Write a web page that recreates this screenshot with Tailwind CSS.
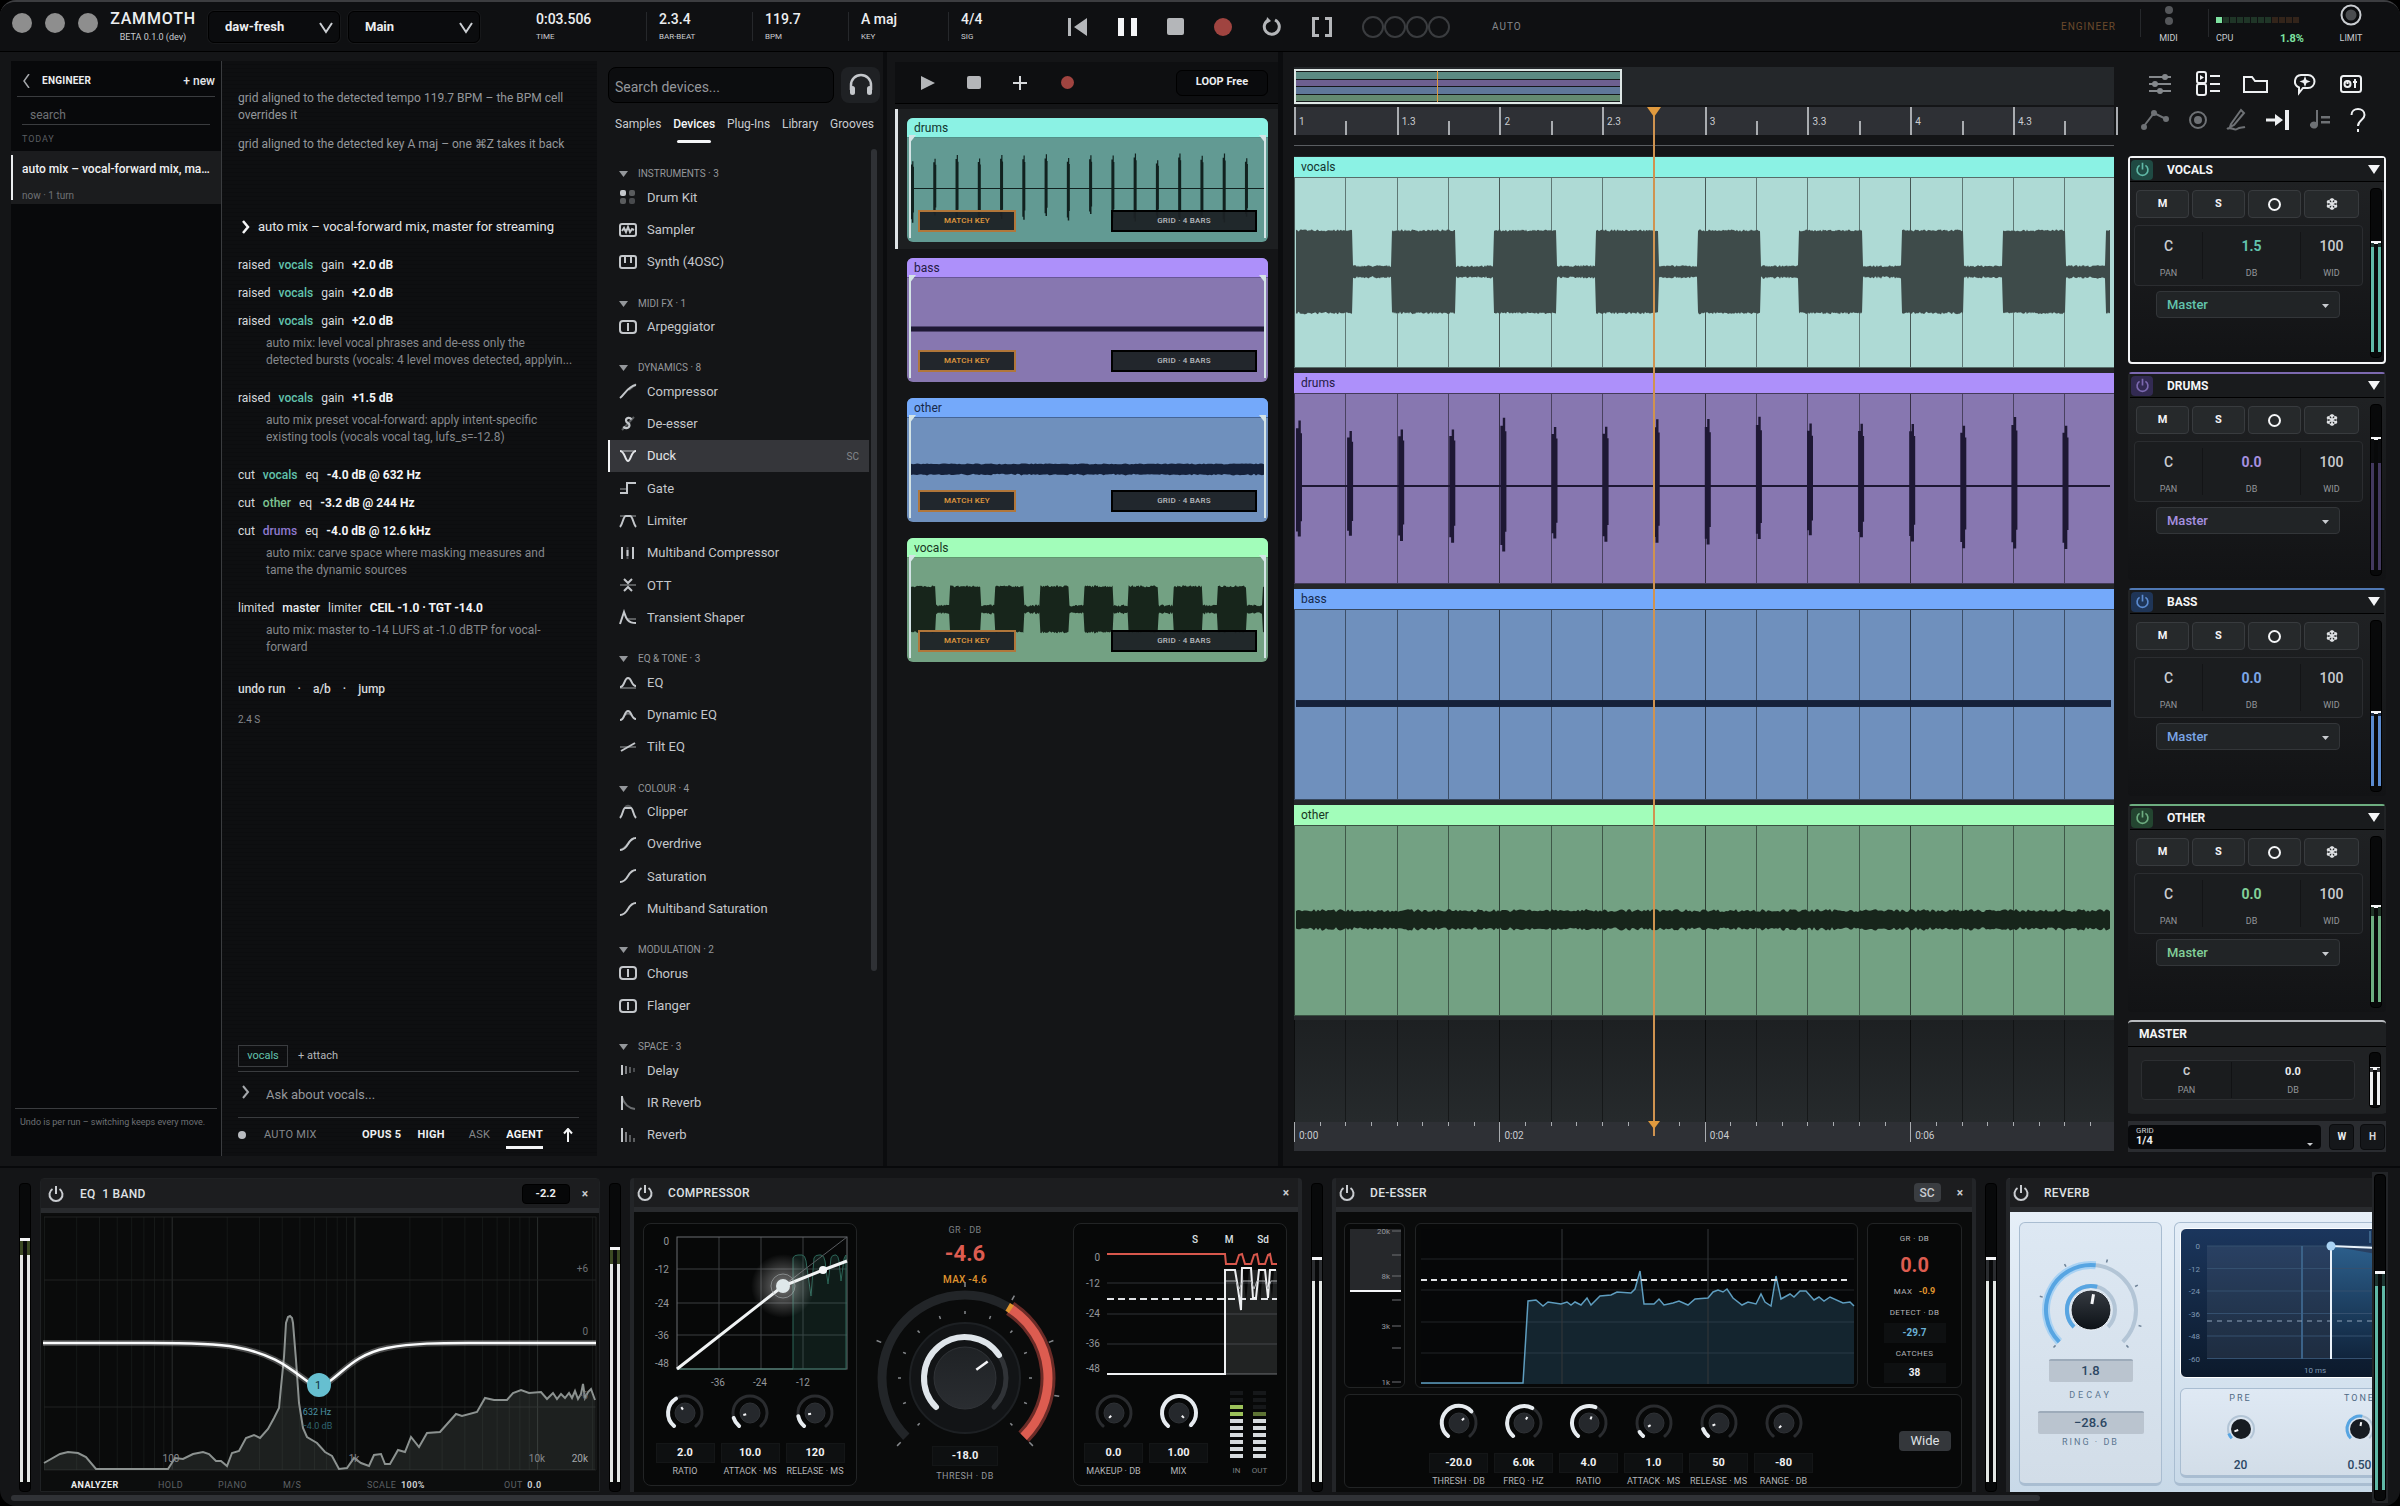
<!DOCTYPE html>
<html lang="en">
<head>
<meta charset="UTF-8">
<meta name="viewport" content="width=device-width, initial-scale=1.0">
<title>Zammoth</title>
<script src="https://cdn.jsdelivr.net/npm/@tailwindcss/browser@4"></script>
</head>
<body class="bg-black font-[Roboto,sans-serif] text-[#c9ccd0] text-[13px]">
<div class="h-screen flex flex-col bg-[#141517] rounded-2xl overflow-hidden border-t-2 border-[#3c3d40]">

<!-- Transport bar -->
<header class="h-[50px] shrink-0 flex items-center bg-[#0f1012] border-b border-black relative">
    <div class="flex gap-[13px] ml-3 -mt-2">
        <i class="size-5 rounded-full bg-[#8e8e8e]"></i>
        <i class="size-5 rounded-full bg-[#8e8e8e]"></i>
        <i class="size-5 rounded-full bg-[#8e8e8e]"></i>
    </div>
    <div class="ml-[10px] w-[90px] text-center leading-none">
        <div class="text-[16px] font-medium tracking-wider text-[#eceef0]">ZAMMOTH</div>
        <div class="text-[9px] mt-1.5 text-[#c9ccd0]">BETA 0.1.0 (dev)</div>
    </div>
    <div class="flex gap-2 ml-[10px]">
        <label class="relative w-[132px] h-8 rounded-md bg-[#0b0c0e] border border-black shadow-[0_0_0_1px_#17181a]">
            <select aria-label="Project" class="appearance-none w-full h-full pl-4 text-[13px] font-bold text-[#eceef0]"><option>daw-fresh</option></select>
            <svg class="absolute right-1.5 top-2.5 pointer-events-none" width="14" height="12" fill="none" stroke="#c9ccd0" stroke-width="2"><path d="M1 1l6 9 6-9"/></svg>
        </label>
        <label class="relative w-[132px] h-8 rounded-md bg-[#0b0c0e] border border-black shadow-[0_0_0_1px_#17181a]">
            <select aria-label="Branch" class="appearance-none w-full h-full pl-4 text-[13px] font-bold text-[#eceef0]"><option>Main</option></select>
            <svg class="absolute right-1.5 top-2.5 pointer-events-none" width="14" height="12" fill="none" stroke="#c9ccd0" stroke-width="2"><path d="M1 1l6 9 6-9"/></svg>
        </label>
    </div>
    <dl id="readouts" class="flex ml-[56px] leading-none"></dl>
    <div class="flex items-center gap-[30px] ml-2">
        <button aria-label="Rewind"><svg width="20" height="18" fill="#b4b6b9"><path d="M0 0h3v18H0zM19 0v18L6 9z"/></svg></button>
        <button aria-label="Pause"><svg width="19" height="18" fill="#f4f5f7"><path d="M0 0h6v18H0zM13 0h6v18h-6z"/></svg></button>
        <button aria-label="Stop"><svg width="17" height="18" fill="#b4b6b9"><rect width="17" height="17" rx="2"/></svg></button>
        <button aria-label="Record"><svg width="18" height="18" fill="#a04440"><circle cx="9" cy="9" r="9"/></svg></button>
        <button aria-label="Loop"><svg width="20" height="20" fill="none" stroke="#b4b6b9" stroke-width="3"><path d="M13 3a7.500 7.500 0 1 1-7 .3"/><path d="M5 0l4 4-5 3z" fill="#b4b6b9" stroke="none"/></svg></button>
        <button aria-label="Punch range"><svg width="20" height="20" fill="none" stroke="#b4b6b9" stroke-width="3"><path d="M7 1.500H1.500v17H7M13 1.500h5.500v17H13"/></svg></button>
    </div>
    <div class="flex ml-[30px]">
        <i class="size-[22px] rounded-full border-2 border-[#3a3c3f]"></i>
        <i class="size-[22px] rounded-full border-2 border-[#3a3c3f]"></i>
        <i class="size-[22px] rounded-full border-2 border-[#3a3c3f]"></i>
        <i class="size-[22px] rounded-full border-2 border-[#3a3c3f]"></i>
    </div>
    <span class="ml-[42px] text-[10px] tracking-widest text-[#85888c]">AUTO</span>
    <span class="ml-auto text-[10px] tracking-widest text-[#6b4a2c]">ENGINEER</span>
    <div class="ml-6 w-[68px] h-7 border-l border-[#26282b] -mt-2 text-center text-[9px] pr-3 pt-px">
        <i class="block size-2 rounded-full bg-[#55575a] mx-auto -mt-1"></i>
        <i class="block size-2 rounded-full bg-[#55575a] mx-auto mt-[3px] mb-[7px]"></i>MIDI
    </div>
    <div class="w-[96px] h-7 border-l border-[#26282b] -mt-2 pl-[7px] pt-2">
        <div id="cpu" class="flex gap-px"></div>
        <div class="flex justify-between items-center text-[9px] mt-2">CPU <b class="text-[11px] text-[#7ee2a0]">1.8%</b></div>
    </div>
    <div class="w-[46px] ml-6 mr-[26px] text-center text-[9px] -mt-1">
        <svg class="mx-auto mb-1.5" width="22" height="22"><circle cx="11" cy="11" r="9.500" fill="#0b0c0e" stroke="#c9ccd0" stroke-width="2"/><circle cx="11" cy="11" r="5.500" fill="#4a4c4f"/></svg>LIMIT
    </div>
</header>

<main class="flex-1 min-h-0 flex pl-[11px] pr-[14px]">

<!-- Engineer -->
<section class="w-[586px] shrink-0 mt-[9px] mb-[10px] flex">
    <aside class="w-[211px] shrink-0 bg-[#08090b] border-r border-[#3a3c3f] flex flex-col">
        <div class="mx-[6px] h-9 flex items-center border-b border-[#3a3c3f] text-[11px] pt-1">
            <svg class="ml-1.5" width="7" height="14" fill="none" stroke="#a4a7ab" stroke-width="1.500"><path d="M6 0L1 7l5 7"/></svg>
            <b class="ml-3 tracking-wide text-[#eceef0] text-[10px]">ENGINEER</b>
            <button class="ml-auto text-[12px] font-medium text-[#e3e5e8]">+ new</button>
        </div>
        <input aria-label="Search chats" placeholder="search" class="mx-[11px] h-7 pt-2 pl-2 text-[12px] border-b border-[#3a3c3f] placeholder-[#6e7175]">
        <h3 class="ml-[11px] mt-[8px] h-[18px] text-[9px] tracking-widest text-[#5a5d61]">TODAY</h3>
        <a href="#" class="block h-[53px] bg-[#1b1c1e] relative px-[11px] pt-2.5">
            <i class="absolute left-0 top-1 bottom-1 w-[2px] bg-[#eceef0]"></i>
            <b class="block font-medium text-[12px] leading-4 text-[#f0f1f3] truncate">auto mix – vocal-forward mix, master for streaming</b>
            <span class="block mt-[11px] text-[10px] leading-4 text-[#6e7175]">now · 1 turn</span>
        </a>
        <p class="mt-auto mb-[26px] mx-[4px] border-t border-[#3a3c3f] pt-[5px] pl-[5px] text-[9px] leading-4 text-[#6e7175] whitespace-nowrap">Undo is per run – switching keeps every move.</p>
    </aside>
    <div class="flex-1 min-w-0 bg-[repeating-linear-gradient(0deg,#0e0f11_0_3px,#0c0d0f_3px_4px)] pl-4 pr-[10px] flex flex-col">
        <div class="pt-[29px] text-[12px] leading-[17px] text-[#94979b]">
            <p>grid aligned to the detected tempo 119.7 BPM – the BPM cell<br>overrides it</p>
            <p class="mt-3">grid aligned to the detected key A maj – one ⌘Z takes it back</p>
        </div>
        <p class="mt-[63px] h-[22px] flex items-center text-[13px] text-[#e3e5e8] whitespace-nowrap">
            <svg class="mr-2 ml-1" width="8" height="14" fill="none" stroke="#f4f5f7" stroke-width="2.500"><path d="M1 1l5 6-5 6"/></svg>auto mix – vocal-forward mix, master for streaming</p>
        <ol id="moves" class="mt-[13px]"></ol>
        <div class="mt-2 flex text-[12px] font-medium text-[#d6d9dc] leading-5"><button>undo run</button><span class="mx-3">·</span><button>a/b</button><span class="mx-3">·</span><button>jump</button></div>
        <span class="mt-[13px] text-[10px] text-[#85888c]">2.4 S</span>
        <div class="mt-auto flex items-center gap-[10px] pb-1 border-b border-[#3a3c3f] mr-2 text-[12px]">
            <button class="w-[50px] h-[22px] border border-[#3a3c3f] text-[11px] text-[#62c3ad]">vocals</button>
            <button class="text-[11px] text-[#b4b6b9]">+ attach</button>
        </div>
        <label class="h-[46px] flex items-center border-b border-[#3a3c3f] mr-2">
            <svg class="mx-1 -mt-1.5" width="8" height="14" fill="none" stroke="#a4a7ab" stroke-width="2"><path d="M1 1l5 6-5 6"/></svg>
            <input aria-label="Ask" placeholder="Ask about vocals..." class="flex-1 pl-3 text-[13px] placeholder-[#94979b]">
        </label>
        <div class="h-[38px] flex items-center text-[11px] tracking-wide text-[#85888c] pb-1">
            <i class="size-2 rounded-full bg-[#b9bcc0] mr-[18px]"></i>
            <button class="mr-auto">AUTO MIX</button>
            <button class="font-bold text-[#eceef0] mr-4">OPUS 5</button>
            <button class="font-bold text-[#eceef0] mr-6">HIGH</button>
            <button class="mr-4">ASK</button>
            <button class="font-bold text-[#f4f5f7] border-b-3 border-[#f4f5f7] mt-1.5 pb-0.5">AGENT</button>
            <button aria-label="Send" class="ml-5 mr-[14px]"><svg width="10" height="14" fill="none" stroke="#f4f5f7" stroke-width="2"><path d="M5 14V2M1 5.500L5 1l4 4.500"/></svg></button>
        </div>
    </div>
</section>

<!-- Browser -->
<section class="w-[290px] shrink-0 pl-[11px] pt-[15px] pb-[15px] flex flex-col border-r-4 border-[#0b0c0e]">
    <div class="flex gap-[7px] shrink-0">
        <input aria-label="Search devices" placeholder="Search devices..." class="w-[226px] h-9 rounded-lg bg-[#0c0d0f] border border-black pl-1.5 pt-1 text-[14px] placeholder-[#94979b]">
        <button aria-label="Preview" class="w-[39px] h-9 rounded-lg bg-[#1f2124] flex items-center justify-center">
            <svg width="26" height="24" fill="none" stroke="#c4c7cb" stroke-width="2.500"><path d="M3 17v-5a10 10 0 0 1 20 0v5"/><rect x="2" y="13" width="5" height="9" rx="2.500" fill="#c4c7cb" stroke="none"/><rect x="19" y="13" width="5" height="9" rx="2.500" fill="#c4c7cb" stroke="none"/></svg>
        </button>
    </div>
    <nav class="flex justify-between pl-[7px] pr-[9px] mt-[11px] text-[12px] shrink-0 leading-5">
        <a href="#">Samples</a>
        <a href="#" class="relative font-medium text-[#f4f5f7]">Devices<i class="absolute inset-x-1 top-[26px] h-[3px] rounded bg-[#f4f5f7]"></i></a>
        <a href="#">Plug-Ins</a><a href="#">Library</a><a href="#">Grooves</a>
    </nav>
    <div class="relative flex-1 min-h-0 mt-[15px] flex">
        <ul id="devices" class="flex-1 flex flex-col mr-[14px]"></ul>
        <i class="absolute right-[6px] top-0 h-[82%] w-[6px] rounded-full bg-[#2f3135]"></i>
    </div>
</section>

<!-- Session -->
<section class="w-[396px] shrink-0 pl-2 pt-[10px] border-r-5 border-[#0b0c0e] mr-[11px]">
    <div class="h-[42px] bg-[#0e0f11] flex items-center pl-[26px] pr-[10px] border-b border-black">
        <button aria-label="Play clip"><svg width="14" height="14" fill="#b4b6b9"><path d="M0 0l14 7-14 7z"/></svg></button>
        <button aria-label="Stop clips" class="ml-8"><svg width="14" height="14" fill="#b4b6b9"><rect width="14" height="13" rx="2"/></svg></button>
        <button aria-label="Add clip" class="ml-8"><svg width="14" height="14" stroke="#d6d9dc" stroke-width="2"><path d="M7 0v14M0 7h14"/></svg></button>
        <button aria-label="Record clip" class="ml-[34px]"><svg width="13" height="13" fill="#a04440"><circle cx="6.500" cy="6.500" r="6.500"/></svg></button>
        <button class="ml-auto w-[92px] h-[26px] rounded-md bg-[#0a0b0d] border border-black text-[11px] font-bold text-[#eceef0]">LOOP Free</button>
    </div>
    <div id="clips" class="mt-[5px]"></div>
</section>

<!-- Arrangement -->
<section class="flex-1 min-w-0 pt-[15px] pb-[15px] flex flex-col relative">
    <div class="h-[38px] bg-[#24272a] shrink-0 pt-[2px] relative">
        <div class="w-[40%] h-[35px] border-2 border-[#dfe8e6] bg-[#15181a] flex flex-col gap-px py-px relative">
            <i class="flex-1 bg-[#5b8a83]"></i><i class="flex-1 bg-[#6d6090]"></i><i class="flex-1 bg-[#5f7799]"></i><i class="flex-1 bg-[#648a70]"></i>
            <i class="absolute left-[43.500%] inset-y-0 w-px bg-[#e09a3e]"></i>
        </div>
    </div>
    <div id="ruler" class="h-[28px] mt-[2px] bg-[#2e3035] shrink-0 relative text-[10px]"></div>
    <div class="h-[21px] shrink-0 pt-[10px]"><i class="block h-px bg-[#5a5d61]"></i></div>
    <div id="lanes" class="shrink-0"></div>
    <div id="empty" class="flex-1 relative bg-linear-to-b from-[#1d2022] to-[#262a2c] overflow-hidden"></div>
    <div id="seconds" class="h-[29px] shrink-0 relative bg-[#2e3035] text-[10px]"></div>
    <i class="absolute left-[43.900%] -ml-px top-[56px] bottom-[30px] w-[2px] bg-[#cf9350]"></i>
    <svg class="absolute left-[43.900%] -ml-[7px] top-[55px]" width="14" height="11" fill="#e09a3e"><path d="M0 0h14L7 10z"/></svg>
    <svg class="absolute left-[43.900%] -ml-[6px] bottom-[37px]" width="12" height="8" fill="#e09a3e"><path d="M0 0h12L6 8z"/></svg>
</section>

<!-- Mixer -->
<section class="w-[258px] shrink-0 ml-[14px] pb-[14px] flex flex-col">
    <div id="tools" class="h-[104px] shrink-0 pt-[19px] px-[13px]">
        <div class="flex justify-between pl-[7px] pr-[11px]">
            <button aria-label="Mixer"><svg width="24" height="26" fill="#85888c" stroke="#85888c" stroke-width="2"><path d="M1 6h22M1 13h22M1 20h22"/><circle cx="17" cy="6" r="2"/><circle cx="7" cy="13" r="2"/><circle cx="12" cy="20" r="2"/></svg></button>
            <button aria-label="Session"><svg width="24" height="26" fill="none" stroke="#eef0f2" stroke-width="2"><rect x="1" y="1" width="9" height="11" rx="2"/><rect x="1" y="13" width="9" height="11" rx="2"/><path d="M14 5h10M14 13h10M14 20h10"/><path d="M4 4l4 2.500L4 9z" fill="#eef0f2" stroke="none"/></svg></button>
            <button aria-label="Files"><svg width="26" height="26" fill="none" stroke="#eef0f2" stroke-width="2"><path d="M1 20V6h8l3 4h12v11H1z"/></svg></button>
            <button aria-label="Assistant"><svg width="24" height="26" fill="none" stroke="#eef0f2" stroke-width="2"><path d="M8 4h7a6.500 6.500 0 0 1 0 13h-5l-4 5v-5.500A6.500 6.500 0 0 1 8 4z"/><path d="M12 5l1.500 4 4 1.500-4 1.500-1.500 4-1.500-4-4-1.500 4-1.500z" fill="#eef0f2" stroke="none"/></svg></button>
            <button aria-label="Devices"><svg width="22" height="26" fill="none" stroke="#eef0f2" stroke-width="2"><rect x="1" y="5" width="20" height="16" rx="2.500"/><circle cx="7.500" cy="13" r="3"/><path d="M7.500 13v-4M15 8v9M13 11h4"/></svg></button>
        </div>
        <div class="flex justify-between mt-[11px] pr-[7px]">
            <button aria-label="Automation"><svg width="28" height="24" fill="#6e7175" stroke="#6e7175" stroke-width="2"><path d="M3 18L13 5l12 6" fill="none"/><circle cx="3" cy="19" r="2"/><circle cx="13" cy="5" r="2"/><circle cx="25" cy="11" r="2"/></svg></button>
            <button aria-label="Focus"><svg width="18" height="24" fill="none" stroke="#6e7175" stroke-width="2"><circle cx="9" cy="12" r="8"/><circle cx="9" cy="12" r="3" fill="#6e7175"/></svg></button>
            <button aria-label="Draw"><svg width="20" height="24" fill="none" stroke="#6e7175" stroke-width="2"><path d="M5 16L15 2l3 3L8 17l-4 2zM1 21c4-3 7 2 10 0s5-1 8-2"/></svg></button>
            <button aria-label="Follow"><svg width="24" height="24" fill="#eef0f2"><path d="M0 10.500h9V6l8 6-8 6v-4.500H0zM19 2h4v20h-4z"/></svg></button>
            <button aria-label="Quantize"><svg width="21" height="24" fill="#6e7175"><path d="M7 2h2v15a4 3.500 0 1 1-2-3zM12 8h9v2.500h-9zM12 13h9v2.500h-9z"/></svg></button>
            <button aria-label="Help"><svg width="16" height="24" fill="none" stroke="#eef0f2" stroke-width="2"><path d="M1.500 7C1.500-1 14.500-1 14.500 7c0 5-6.500 5-6.500 11"/><path d="M8 21v3"/></svg></button>
        </div>
    </div>
    <div id="strips" class="flex flex-col gap-2"></div>
    <div class="mt-2 h-[94px] rounded border-t-2 border-[#b9bcc0] bg-[#1e2022]">
        <h3 class="h-[25px] pl-[11px] flex items-center text-[12px] font-bold text-[#f4f5f7] border-b border-black">MASTER</h3>
        <div class="flex h-[66px] bg-[#202224] items-center">
            <div class="ml-[13px] w-[214px] h-10 rounded border border-[#2c2e31] bg-[#1a1c1e] flex text-center items-center">
                <div class="w-[90px] border-r border-[#111214]"><b class="block text-[11px] leading-5">C</b><span class="block text-[9px] leading-4 text-[#94979b]">PAN</span></div>
                <div class="flex-1"><b class="block text-[11px] leading-5 text-[#eceef0]">0.0</b><span class="block text-[9px] leading-4 text-[#94979b]">DB</span></div>
            </div>
            <div class="ml-[14px] h-14" id="masterMeter"></div>
        </div>
    </div>
    <div class="mt-[7px] h-[31px] bg-[#2a2c30] flex items-center pr-px gap-1.5">
        <label class="relative w-[195px] h-6 rounded bg-[#08090b] block pl-2 text-[8px] leading-none pt-0.5">GRID
            <select aria-label="Grid" class="appearance-none block w-full text-[11px] leading-3 font-bold text-[#eceef0]"><option>1/4</option></select>
            <svg class="absolute right-2 bottom-0.5" width="6" height="4" fill="#c9ccd0"><path d="M0 0h6L3 3z"/></svg>
        </label>
        <button class="ml-0.5 w-[25px] h-[26px] rounded bg-[#15171a] border border-[#0b0c0e] text-[10px] font-bold text-[#eceef0]">W</button>
        <button class="w-[25px] h-[26px] rounded bg-[#15171a] border border-[#0b0c0e] text-[10px] font-bold text-[#d6d9dc]">H</button>
    </div>
</section>
</main>

<!-- Device rack -->
<footer class="h-[340px] shrink-0 border-t-2 border-[#08090b] flex relative">
    <div class="flex-1 min-w-0 overflow-hidden flex gap-[9px] pl-[19px] pt-[10px] pb-[14px]">
        <div data-meter="17.5,23.5,#e3e7e4,#3b4a23" class="w-3 shrink-0 pt-[5px]"></div>

        <article class="w-[560px] shrink-0 bg-[#0c0d0d] border border-[#1f2123] rounded-t flex flex-col">
            <header class="h-[34px] shrink-0 bg-[#1c1d1f] border-b-5 border-[#292b2e] flex items-center pl-1.5 pr-[11px]">
                <button aria-label="Power" data-power></button>
                <h2 class="ml-[15px] text-[12px] font-medium tracking-wide text-[#dfe1e4]">EQ&nbsp; 1 BAND</h2>
                <output class="ml-auto w-12 h-5 rounded bg-[#060708] border border-black text-[11px] font-bold text-center leading-[18px] text-[#eceef0]">-2.2</output>
                <button aria-label="Close" class="ml-3 text-[12px] font-bold">×</button>
            </header>
            <div class="flex-1 min-h-0 relative"><svg id="eq" viewBox="42 1213 558 260" class="absolute inset-0 size-full"></svg></div>
            <div class="h-[18px] shrink-0 flex items-end text-[9px] leading-3 tracking-wider text-[#5e6165] pl-[30px]">
                <button class="font-bold text-[#eceef0] w-[87px] text-left">ANALYZER</button><button class="w-[60px] text-left">HOLD</button><button class="w-[65px] text-left">PIANO</button><button class="w-[84px] text-left">M/S</button>
                <span class="w-[137px]">SCALE <b class="ml-0.5 text-[#c9ccd0]">100%</b></span><span>OUT <b class="ml-0.5 text-[#c9ccd0]">0.0</b></span>
            </div>
        </article>

        <div data-meter="20.5,26.5,#e3e7e4,#3b4a23" class="w-3 shrink-0 pt-[5px]"></div>

        <article class="w-[672px] shrink-0 border-x-4 border-[#232528] rounded-t bg-[#0a0b0b] flex flex-col">
            <header class="h-[34px] shrink-0 bg-[#1c1d1f] border-b-5 border-[#292b2e] flex items-center pl-0.5 pr-[9px]">
                <button aria-label="Power" data-power></button>
                <h2 class="ml-[14px] text-[12px] font-medium tracking-wide text-[#dfe1e4]">COMPRESSOR</h2>
                <button aria-label="Close" class="ml-auto text-[12px] font-bold">×</button>
            </header>
            <div class="flex-1 flex justify-between pl-[9px] pr-[11px] pt-[11px] pb-[6px]">
                <div class="w-[214px] rounded-lg border border-[#222425] bg-[#070808] flex flex-col items-center">
                    <svg id="transfer" viewBox="644 1224 212 164" width="212" height="164"></svg>
                    <div id="compKnobs" class="flex gap-1.5"></div>
                </div>
                <div class="w-[200px] text-center relative">
                    <div class="text-[9px] tracking-wider text-[#7d8084] leading-3 pt-px">GR · DB</div>
                    <div class="mt-0.5 text-[22px] leading-8 font-bold text-[#dd5c50]">-4.6</div>
                    <div class="text-[10px] tracking-wide leading-5 text-[#e0952f] font-medium">MAX -4.6</div>
                    <svg id="bigKnob" viewBox="865 1278 200 172" width="200" height="172" class="absolute left-0 top-[55px]"></svg>
                    <output class="absolute left-[67px] top-[223px] w-[66px] h-[20px] bg-[#0e1011] border border-[#141617] text-[11px] font-bold text-[#f0f1f3] leading-[18px]">-18.0</output>
                    <div class="absolute inset-x-0 top-[247px] text-[9px] tracking-wider text-[#94979b]">THRESH · DB</div>
                </div>
                <div class="w-[214px] rounded-lg border border-[#222425] bg-[#070808] flex flex-col">
                    <svg id="history" viewBox="1074 1224 212 164" width="212" height="164"></svg>
                    <div class="flex pl-2.5">
                        <div id="compKnobs2" class="flex gap-1.5"></div>
                        <div id="leds" class="flex gap-2.5 ml-[22px] text-[8px] text-center text-[#7d8084]"></div>
                    </div>
                </div>
            </div>
        </article>

        <div data-meter="23.7,33,#e3e7e4,#2b2d30" class="w-3 shrink-0 pt-[5px]"></div>

        <article class="w-[644px] shrink-0 border-x-4 border-[#232528] rounded-t bg-[#0a0b0b] flex flex-col">
            <header class="h-[34px] shrink-0 bg-[#1c1d1f] border-b-5 border-[#292b2e] flex items-center pl-0.5 pr-[9px]">
                <button aria-label="Power" data-power></button>
                <h2 class="ml-[14px] text-[12px] font-medium tracking-wide text-[#dfe1e4]">DE-ESSER</h2>
                <button class="ml-auto w-[27px] h-[19px] rounded bg-[#3a3d41] text-[12px] font-medium">SC</button>
                <button aria-label="Close" class="ml-4 text-[12px] font-bold">×</button>
            </header>
            <div class="flex-1 flex flex-col gap-[6px] pl-[8px] pr-[10px] pt-[11px] pb-[6px]">
                <div class="flex justify-between h-[165px]">
                    <div class="w-[61px] rounded-md border border-[#222425] bg-[#070808]"><svg id="band" viewBox="1345 1223 59 163" width="59" height="163"></svg></div>
                    <div class="w-[443px] rounded-md border border-[#222425] bg-[#070808]"><svg id="detect" viewBox="1415 1223 441 163" width="441" height="163"></svg></div>
                    <div class="w-[95px] rounded-md border border-[#222425] bg-[#070808] text-center text-[8px] tracking-wider text-[#b4b6b9] pt-[9px]">
                        <div class="leading-3">GR · DB</div>
                        <div class="mt-0.5 text-[20px] leading-[36px] tracking-normal font-bold text-[#dd5c50]">0.0</div>
                        <div class="leading-4">MAX <b class="ml-1 text-[9px] tracking-normal text-[#e0952f]">-0.9</b></div>
                        <div class="mt-[7px] leading-3">DETECT · DB</div>
                        <output class="block mx-auto mt-1 w-[62px] h-5 leading-5 bg-[#0e1011] text-[10px] tracking-normal font-bold text-[#69b0d6]">-29.7</output>
                        <div class="mt-[5px] leading-3">CATCHES</div>
                        <output class="block mx-auto mt-[3px] w-[62px] h-5 leading-5 bg-[#0e1011] text-[10px] tracking-normal font-bold text-[#f0f1f3]">38</output>
                    </div>
                </div>
                <div class="flex-1 rounded-md border border-[#222425] bg-[#070808] flex pl-[84px] pr-[10px] pt-[3px]">
                    <div id="deKnobs" class="flex gap-1.5"></div>
                    <button class="ml-auto mt-[33px] w-[52px] h-[20px] rounded bg-[#34373b] text-[13px] text-[#dfe1e4]">Wide</button>
                </div>
            </div>
        </article>

        <div data-meter="23.7,33,#e3e7e4,#2b2d30" class="w-3 shrink-0 pt-[5px]"></div>

        <article class="w-[644px] shrink-0 border-l-4 border-[#232528] rounded-t bg-[#cfdeec] flex flex-col">
            <header class="h-[34px] shrink-0 bg-[#1c1d1f] border-b-5 border-[#292b2e] flex items-center pl-0.5">
                <button aria-label="Power" data-power></button>
                <h2 class="ml-[14px] text-[12px] font-medium tracking-wide text-[#dfe1e4]">REVERB</h2>
            </header>
            <div class="flex-1 flex gap-3 pl-[9px] pt-[10px] pb-[6px] bg-linear-to-b from-[#e6eff8] to-[#c8d9e8]">
                <div class="w-[143px] shrink-0 rounded-md border border-b-3 border-[#a9bdd1] bg-linear-to-b from-[#dde8f3] to-[#d2dde8] flex flex-col items-center text-[#5b7690]">
                    <svg id="decay" viewBox="2020 1225 141 136" width="141" height="136"></svg>
                    <output class="w-[84px] h-[23px] rounded-xs bg-[#bac4cf] border-t-2 border-[#9dabba] text-center text-[13px] leading-5 font-medium text-[#2c4763]">1.8</output>
                    <span class="mt-[7px] text-[9px] leading-3 tracking-[3px]">DECAY</span>
                    <output class="mt-[10px] w-[106px] h-[23px] rounded-xs bg-[#bac4cf] border-t-2 border-[#9dabba] text-center text-[13px] leading-5 font-medium text-[#2c4763]">−28.6</output>
                    <span class="mt-0.5 text-[9px] leading-3 tracking-[2px]">RING · DB</span>
                </div>
                <div class="flex-1 rounded-md border border-b-3 border-[#a9bdd1] p-[5px] flex flex-col gap-[10px]">
                    <div class="h-[150px] rounded-md overflow-hidden bg-linear-to-b from-[#1b365d] to-[#0c1a2c] border border-white"><svg id="tail" viewBox="2181 1231 446 148" width="446" height="148"></svg></div>
                    <div id="reverbKnobs" class="flex-1 rounded-md border border-b-3 border-[#a9bdd1] bg-linear-to-b from-[#dfe9f4] to-[#d2dde8] flex text-center text-[#4f6a85]"></div>
                </div>
            </div>
        </article>
    </div>
    <div class="w-4 shrink-0 mr-3 mt-1 mb-[3px] bg-[#232528] p-0.5" data-meter="29.5,35,#5fb8a6,#1c3531"></div>
    <i class="absolute left-[11px] right-[360px] bottom-[5px] h-[6px] rounded-full bg-[#303236]"></i>
</footer>
</div>

<script>
const $ = id => document.getElementById(id);

// small seeded generator, so the waveforms are the same at each load
let seed = 7;
const rnd = () => (seed = (seed * 16807) % 2147483647) / 2147483647;

const rad = a => a * Math.PI / 180;
const px = (cx, r, a) => (cx + r * Math.sin(rad(a))).toFixed(1);
const py = (cy, r, a) => (cy - r * Math.cos(rad(a))).toFixed(1);
const arc = (cx, cy, r, a0, a1) =>
    `M${px(cx, r, a0)} ${py(cy, r, a0)}A${r} ${r} 0 ${a1 - a0 > 180 ? 1 : 0} 1 ${px(cx, r, a1)} ${py(cy, r, a1)}`;
const ray = (cx, cy, r0, r1, a) => `M${px(cx, r0, a)} ${py(cy, r0, a)}L${px(cx, r1, a)} ${py(cy, r1, a)}`;

/* ---------- header ---------- */
$('readouts').innerHTML = [
    ['0:03.506', 'TIME', 'w-[110px]'], ['2.3.4', 'BAR-BEAT', 'w-[106px]'], ['119.7', 'BPM', 'w-[96px]'],
    ['A maj', 'KEY', 'w-[100px]'], ['4/4', 'SIG', 'w-[112px]'],
].map(([v, l, w], i) => `<div class="${w} flex flex-col-reverse h-[29px] justify-between ${i ? 'pl-3 border-l border-[#26282b]' : ''}">
    <dt class="text-[8px] text-[#c9ccd0]">${l}</dt><dd class="text-[14px] font-medium text-[#eceef0]">${v}</dd></div>`).join('');
$('cpu').innerHTML = Array.from({length: 12}, (_, i) =>
    `<i class="h-[6px] w-[6px] ${i == 0 ? 'bg-[#7ee2a0]' : i < 8 ? 'bg-[#1f3527]' : 'bg-[#33241a]'}"></i>`).join('');

/* ---------- agent log ---------- */
const trackText = {vocals: 'text-[#62c3ad]', other: 'text-[#7fc493]', drums: 'text-[#8f79cf]', master: 'text-[#eceef0]'};
$('moves').innerHTML = [
    ['raised', 'vocals', 'gain', '+2.0 dB'],
    ['raised', 'vocals', 'gain', '+2.0 dB'],
    ['raised', 'vocals', 'gain', '+2.0 dB', 'auto mix: level vocal phrases and de-ess only the<br>detected bursts (vocals: 4 level moves detected, applyin...'],
    ['raised', 'vocals', 'gain', '+1.5 dB', 'auto mix preset vocal-forward: apply intent-specific<br>existing tools (vocals vocal tag, lufs_s=-12.8)'],
    ['cut', 'vocals', 'eq', '-4.0 dB @ 632 Hz'],
    ['cut', 'other', 'eq', '-3.2 dB @ 244 Hz'],
    ['cut', 'drums', 'eq', '-4.0 dB @ 12.6 kHz', 'auto mix: carve space where masking measures and<br>tame the dynamic sources'],
    ['limited', 'master', 'limiter', 'CEIL -1.0 · TGT -14.0', 'auto mix: master to -14 LUFS at -1.0 dBTP for vocal-<br>forward'],
].map(([verb, track, what, amount, why]) => `<li class="text-[12px] leading-7 text-[#d6d9dc]">
    <div class="flex gap-2"><span>${verb}</span><span class="font-medium ${trackText[track]}">${track}</span><span>${what}</span><b class="text-[#f4f5f7]">${amount}</b></div>
    ${why ? `<p class="pl-7 pb-[15px] leading-[17px] text-[#85888c] whitespace-nowrap">${why}</p>` : ''}</li>`).join('');

/* ---------- device browser ---------- */
const icons = {
    drum: '<g stroke="none" fill="currentColor"><rect x="1" y="2" width="6" height="6" rx="2"/><rect x="10" y="2" width="6" height="6" rx="2" opacity=".4"/><rect x="1" y="10" width="6" height="6" rx="2" opacity=".4"/><rect x="10" y="10" width="6" height="6" rx="2" opacity=".3"/></g>',
    sampler: '<rect x="1" y="3" width="16" height="12" rx="2"/><path d="M3 10l2-3 2 4 2-5 2 5 2-3 2 1"/>',
    synth: '<rect x="1" y="3" width="16" height="12" rx="2"/><path d="M6 3v7M12 3v7"/>',
    split: '<rect x="1" y="3" width="16" height="12" rx="3"/><path d="M9 5v8"/>',
    comp: '<path d="M1 16C5 13 9 4 17 3"/><path d="M10 8l7-6" opacity=".4"/>',
    deess: '<path d="M12.500 4.500C11 2 7 2.500 7 5.500c0 3 4 2 3.500 5-.5 3-5 3.500-6 1" stroke-width="2.200"/><path d="M3 15L15 2" opacity=".4"/>',
    duck: '<path d="M1 4c5 0 5 10 8 10s3-10 8-10"/><path d="M1 4h16" opacity=".4"/>',
    gate: '<path d="M1 14h7V4h9"/><path d="M1 10h6" opacity=".4"/>',
    limiter: '<path d="M1 15C4 12 4 4 7 4h4c3 0 3 8 6 11"/><path d="M1 4h16" opacity=".4"/>',
    bands: '<path d="M3 3v12M14 3v12"/><path d="M8.500 6v6"/><path d="M8.500 3v12" opacity=".35"/>',
    ott: '<path d="M5 3l4 4 4-4M5 15l4-4 4 4"/><path d="M1 9h16" opacity=".4"/>',
    transient: '<path d="M1 15L5 3c2 6 3 11 12 11"/><path d="M9 10h8" opacity=".4"/>',
    eq: '<path d="M1 14C6 14 5 5 9 5s3 8 8 8"/><path d="M1 15h16" opacity=".4"/>',
    dyneq: '<path d="M1 14C6 14 5 5 9 5s3 8 8 8"/><path d="M6 9c2-2 4-2 6 0" opacity=".5"/>',
    tilt: '<path d="M2 13L16 5"/><path d="M1 9h16" opacity=".4"/>',
    clip: '<path d="M1 15C4 12 4 5 6 5h6c2 0 2 7 5 10"/><path d="M6 5c1-3 5-3 6 0" opacity=".4"/>',
    curve: '<path d="M1 15c9 0 7-12 16-12"/>',
    drive: '<path d="M1 15c9 0 7-12 16-12"/><path d="M1 15C9 13 8 6 15 3" opacity=".4"/>',
    delay: '<path d="M3 4v10"/><path d="M7 5v8" opacity=".6"/><path d="M11 6v6" opacity=".4"/><path d="M15 7v4" opacity=".3"/>',
    ir: '<path d="M3 2v14"/><path d="M3 3c2 7 6 11 13 12" opacity=".5"/>',
    reverb: '<path d="M3 2v14"/><path d="M7 6v10" opacity=".6"/><path d="M11 9v7" opacity=".4"/><path d="M15 12v4" opacity=".4"/>',
};
const groups = [
    ['INSTRUMENTS', [['Drum Kit', 'drum'], ['Sampler', 'sampler'], ['Synth (4OSC)', 'synth']]],
    ['MIDI FX', [['Arpeggiator', 'split']]],
    ['DYNAMICS', [['Compressor', 'comp'], ['De-esser', 'deess'], ['Duck', 'duck'], ['Gate', 'gate'], ['Limiter', 'limiter'], ['Multiband Compressor', 'bands'], ['OTT', 'ott'], ['Transient Shaper', 'transient']]],
    ['EQ &amp; TONE', [['EQ', 'eq'], ['Dynamic EQ', 'dyneq'], ['Tilt EQ', 'tilt']]],
    ['COLOUR', [['Clipper', 'clip'], ['Overdrive', 'drive'], ['Saturation', 'curve'], ['Multiband Saturation', 'curve']]],
    ['MODULATION', [['Chorus', 'split'], ['Flanger', 'split']]],
    ['SPACE', [['Delay', 'delay'], ['IR Reverb', 'ir'], ['Reverb', 'reverb']]],
];
$('devices').innerHTML = groups.map(([name, items]) => `
    <li class="flex-1 flex items-end pl-[11px] text-[10px] leading-[14px] text-[#94979b]"><svg class="mr-[10px] mb-[3px]" width="9" height="7" fill="#94979b"><path d="M0 0h9L4.500 6z"/></svg>${name} · ${items.length}</li>` +
    items.map(([label, icon]) => `<li class="flex-1 flex items-center pl-[11px] gap-[10px] text-[13px] border-l-2 ${label == 'Duck' ? 'bg-[#35363a] border-[#f4f5f7] text-[#e3e5e8]' : 'border-transparent text-[#c4c7cb]'}">
        <svg class="-ml-0.5" width="18" height="18" fill="none" stroke="currentColor" stroke-width="2">${icons[icon]}</svg>${label}
        ${label == 'Duck' ? '<span class="ml-auto mr-2.5 text-[10px] text-[#85888c]">SC</span>' : ''}</li>`).join('')).join('');

/* ---------- waveforms ---------- */
const svg = (w, h, body) => `<svg viewBox="0 0 ${w} ${h}" preserveAspectRatio="none" class="absolute inset-0 size-full">${body}</svg>`;

// amp(x) gives the half height at x, mirrored around mid
function envelope(x0, x1, mid, amp, color, step = 2) {
    let up = '', down = '';
    for (let x = x0; x <= x1; x += step) {
        const a = amp(x);
        up += `L${x} ${(mid - a).toFixed(1)}`;
        down = `L${x} ${(mid + a - rnd()).toFixed(1)}` + down;
    }
    return `<path fill="${color}" d="M${x0} ${mid}${up}${down}z"/>`;
}
const gated = (blocks, hi, lo) => x => blocks.some(([a, b]) => x >= a && x <= b) ? hi + rnd() * 2 : lo + rnd() * 2;
function pulses(x0, step, n, mid, amp, w, color, len) {
    let s = `<path stroke="${color}" stroke-width="${w > 4 ? 2 : 1}" d="M${x0} ${mid}H${len}"/>`;
    for (let i = 0; i < n; i++) {
        const x = x0 + i * step, a = amp * (.8 + rnd() * .25), b = amp * (.75 + rnd() * .3);
        s += `<path fill="${color}" d="M${x} ${mid - a * .9}h${w * .4}v${-a * .12}h${w * .4}v${a * .2}h${w * .2}V${mid + b * .7}h${-w * .2}v${b * .3}h${-w * .5}v${-b * .1}h${-w * .3}z"/>`;
    }
    return s;
}

/* ---------- session clips ---------- */
const clipBlocks = [[0, 24], [39, 69], [84, 112], [129, 157], [173, 201], [217, 246], [262, 290], [306, 334], [351, 352]];
$('clips').innerHTML = [
    ['drums', 'bg-[#8bf2e4]', 'bg-[#629a93]', 'text-[#12332e]', () => pulses(0, 22.2, 16, 50, 33, 3, '#11211f', 352)],
    ['bass', 'bg-[#ad90fa]', 'bg-[#8777b0]', 'text-[#241a44]', () => '<rect y="48" width="352" height="5" fill="#1e1834"/>'],
    ['other', 'bg-[#74a9fa]', 'bg-[#6f90bd]', 'text-[#14284a]', () => envelope(0, 352, 51, () => 5 + rnd(), '#15213a')],
    ['vocals', 'bg-[#a2fdba]', 'bg-[#73a183]', 'text-[#17351f]', () => envelope(0, 352, 51, gated(clipBlocks, 22, 3), '#17251b', 1)],
].map(([name, head, body, text, wave], i) => `
    <div class="h-[140px] pt-[9px] pl-[9px] pr-[10px] border-l-3 ${i ? 'border-transparent' : 'border-[#dfe3e6] bg-[#1d1f21]'}">
        <div class="h-[124px] rounded-md overflow-hidden ${body} flex flex-col">
            <h4 class="h-5 ${head} ${text} pl-[7px] text-[12px] leading-5 border-b border-black/40">${name}</h4>
            <div class="flex-1 relative mx-[2px] mb-1">
                <div class="absolute inset-x-[2px] inset-y-0">${svg(352, 99, wave())}</div>
                <i class="absolute left-0 inset-y-0 w-[2px] bg-[#d4e4e6]"></i><i class="absolute right-0 inset-y-0 w-[2px] bg-[#d4e4e6]"></i>
                <svg class="absolute left-0 -top-[3px]" width="7" height="9" fill="#d4e4e6"><path d="M0 0h7L0 9z"/></svg>
                <svg class="absolute right-0 -top-[3px]" width="7" height="9" fill="#d4e4e6"><path d="M0 0h7v9z"/></svg>
                <button class="absolute left-[9px] bottom-[6px] w-[98px] h-[22px] bg-[#1c2225]/95 border-2 border-[#b0763a] text-[8px] font-medium tracking-wide text-[#e09a3e]">MATCH KEY</button>
                <button class="absolute right-[9px] bottom-[6px] w-[146px] h-[22px] bg-[#1c2225]/95 border-2 border-black text-[8px] font-medium tracking-wide text-[#b9bcc0]">GRID · 4 BARS</button>
            </div>
        </div>
    </div>`).join('');

/* ---------- arrangement ---------- */
const GRID = 6.262; // percent of the lane for one beat
const beats = Array.from({length: 16}, (_, i) => i);
$('ruler').innerHTML = beats.concat(16).map(i =>
    `<i class="absolute bottom-0 w-[2px] bg-[#a9acb0] ${i % 2 ? 'h-[14px]' : 'h-full'}" style="left:${i * GRID}%"></i>` +
    (i % 2 || i == 16 ? '' : `<span class="absolute top-[7px] ml-[5px] text-[#c9ccd0]" style="left:${i * GRID}%">${1 + Math.floor(i / 4)}${i % 4 ? '.3' : ''}</span>`)).join('');
$('seconds').innerHTML = Array.from({length: 32}, (_, i) =>
    `<i class="absolute top-0 w-px bg-[#a9acb0] ${i % 8 ? 'h-1' : 'h-[20px]'}" style="left:${i * GRID / 2}%"></i>`).join('') +
    ['0:00', '0:02', '0:04', '0:06'].map((t, i) => `<span class="absolute top-[6px] ml-[5px]" style="left:${i * GRID * 4}%">${t}</span>`).join('');

const gridLines = (tone) => beats.map(i => `<i class="absolute inset-y-0 w-px ${i % 4 ? tone : 'bg-black/60'}" style="left:${i * GRID}%"></i>`).join('');
const laneBlocks = [[0, 58], [98, 161], [200, 262], [302, 364], [404, 466], [505, 568], [608, 669], [709, 771], [812, 816]];
$('lanes').innerHTML = [
    ['vocals', 'bg-[#8bf2e4]', 'bg-[#aedad5]', 'text-[#12332e]', () => envelope(2, 816, 95, gated(laneBlocks, 41, 5), '#3e4b4a', 1)],
    ['drums', 'bg-[#ad90fa]', 'bg-[#8777b0]', 'text-[#241a44]', () => pulses(2, 51.1, 16, 93, 66, 6, '#1e1834', 816)],
    ['bass', 'bg-[#74a9fa]', 'bg-[#6f90bd]', 'text-[#14284a]', () => '<rect x="2" y="91" width="815" height="7" fill="#15213a"/>'],
    ['other', 'bg-[#a2fdba]', 'bg-[#73a183]', 'text-[#17351f]', () => envelope(2, 816, 95, () => 8 + rnd() * 3, '#17251b')],
].map(([name, head, body, text, wave]) => `
    <div class="h-[216px] bg-[#25272a] pt-px">
        <h4 class="h-5 ${head} ${text} pl-[7px] text-[12px] leading-5">${name}</h4>
        <div class="h-[191px] relative ${body} border-y border-black/50">${gridLines('bg-black/45')}${svg(820, 191, wave())}</div>
    </div>`).join('');
$('empty').innerHTML = gridLines('bg-black/40');

/* ---------- meters ---------- */
const meter = (peak, top, color, dim) => `<div class="relative w-3 h-full rounded-sm bg-[#08090a] border border-black">
    <i class="absolute inset-x-0 h-[3px] bg-[#f4f5f7]" style="top:${peak}%"></i>
    <i class="absolute left-0 w-[3px] bottom-[3%]" style="top:${+peak + 1}%;background:linear-gradient(${dim} 0 ${top - peak}%,${color} ${top - peak}%)"></i>
    <i class="absolute right-0 w-[3px] bottom-[3%]" style="top:${+peak + 1}%;background:linear-gradient(${dim} 0 ${top - peak}%,${color} ${top - peak}%)"></i></div>`;
document.querySelectorAll('[data-meter]').forEach(el => el.innerHTML = meter(...el.dataset.meter.split(',')));
$('masterMeter').innerHTML = meter(26, 36, '#eef0f2', '#3a3c3f');

/* ---------- mixer strips ---------- */
const powerIcon = c => `<svg width="18" height="18" fill="none" stroke="${c}" stroke-width="2"><path d="M5.500 4a6.500 6.500 0 1 0 7 0M9 1v8"/></svg>`;
document.querySelectorAll('[data-power]').forEach(el => el.innerHTML = powerIcon('#c9ccd0'));
$('strips').innerHTML = [
    ['VOCALS', '1.5', 'text-[#62c3ad]', 'bg-[#1f4a43]', 'border-2 border-[#f4f5f7]', '#5fb8a6', [31, 35, '#5fb8a6', '#1c3531']],
    ['DRUMS', '0.0', 'text-[#a690e0]', 'bg-[#322a52]', 'border-t-2 border-x-2 border-x-transparent border-t-[#7c69b0]', '#7c69b0', [19, 37, '#43395f', '#0b0c0e']],
    ['BASS', '0.0', 'text-[#7ba6e6]', 'bg-[#1f3557]', 'border-t-2 border-x-2 border-x-transparent border-t-[#5079b5]', '#5b8bd0', [53, 57, '#5b8bd0', '#1b2c45']],
    ['OTHER', '0.0', 'text-[#82cf99]', 'bg-[#234530]', 'border-t-2 border-x-2 border-x-transparent border-t-[#6dad80]', '#6dad80', [40, 50, '#6dad80', '#1f3326']],
].map(([name, db, text, glow, edge, color, m]) => `
    <div class="h-[208px] rounded ${edge} bg-linear-to-b from-[#212325] to-[#121315] flex flex-col">
        <div class="h-[24px] shrink-0 flex items-center bg-[#191b1d] border-b border-black pr-1">
            <button aria-label="Power" class="w-[22px] h-[20px] rounded ml-px flex items-center justify-center ${glow}"><svg width="15" height="15" viewBox="0 0 18 18" fill="none" stroke="${color}" stroke-width="2"><path d="M5.500 4a6.500 6.500 0 1 0 7 0M9 1v8"/></svg></button>
            <h3 class="ml-[14px] text-[12px] font-bold text-[#f4f5f7]">${name}</h3>
            <svg class="ml-auto" width="12" height="9" fill="#f4f5f7"><path d="M0 0h12L6 9z"/></svg>
        </div>
        <div class="flex-1 flex pl-[4px] pr-0.5 pt-[6px]">
            <div class="w-[229px]">
                <div class="flex gap-[3px] pl-[2px] text-[11px] font-bold text-[#f4f5f7] mt-[2px]">
                    <button class="w-[53px] h-7 rounded border border-[#383b3e] bg-[#26292b]">M</button>
                    <button class="w-[53px] h-7 rounded border border-[#383b3e] bg-[#26292b]">S</button>
                    <button aria-label="Arm" class="w-[53px] h-7 rounded border border-[#383b3e] bg-[#26292b]"><i class="block size-[13px] mx-auto rounded-full border-2 border-[#f4f5f7]"></i></button>
                    <button aria-label="Freeze" class="w-[55px] h-7 rounded border border-[#383b3e] bg-[#26292b]"><svg class="mx-auto" width="12" height="12" fill="none" stroke="#dfe1e4" stroke-width="1.500"><path d="M6 0v12M1 3l10 6M1 9l10-6M4 1l2 2 2-2M4 11l2-2 2 2M1 5l2-1V2M11 7L9 8v2M1 7l2 1v2M11 5L9 4V2"/></svg></button>
                </div>
                <div class="mt-[7px] h-[61px] rounded border border-[#2b2d30] bg-[#1b1d1f] flex text-center text-[9px] text-[#94979b] py-[6px]">
                    <div class="w-[68px] border-r border-[#131416] flex flex-col justify-between items-center leading-3"><b class="text-[14px] mt-2 font-medium text-[#c9ccd0]">C</b>PAN</div>
                    <div class="flex-1 border-r border-[#131416] flex flex-col justify-between items-center leading-3"><b class="text-[14px] mt-2 ${text}">${db}</b>DB</div>
                    <div class="w-[61px] flex flex-col justify-between items-center leading-3"><b class="text-[14px] mt-2 font-medium text-[#c9ccd0]">100</b>WID</div>
                </div>
                <label class="relative block ml-[22px] mt-[5px] w-[184px] h-[27px] rounded border border-[#333639] bg-[#212426]">
                    <select aria-label="${name} output" class="appearance-none w-full h-full pl-[10px] text-[13px] font-medium ${text}"><option>Master</option></select>
                    <svg class="absolute right-2.5 top-3 pointer-events-none" width="7" height="4" fill="#c9ccd0"><path d="M0 0h7L3.500 4z"/></svg>
                </label>
            </div>
            <div class="ml-auto mb-1">${meter(...m)}</div>
        </div>
    </div>`).join('');

/* ---------- EQ ---------- */
const line = (d, c, w = 1, extra = '') => `<path d="${d}" fill="none" stroke="${c}" stroke-width="${w}" ${extra}/>`;
const label = (x, y, t, c, size = 10, anchor = 'middle') => `<text x="${x}" y="${y}" fill="${c}" font-size="${size}" text-anchor="${anchor}">${t}</text>`;
const eqPoints = '45,1463 61,1454 69,1452 79,1453 87,1457 97,1469 169,1469 176,1458 184,1459 194,1454 204,1452 210,1454 217,1461 222,1461 228,1466 233,1453 240,1451 247,1438 255,1435 261,1438 269,1429 275,1418 280,1408 282,1387 285,1357 287,1323 289,1317 291,1316 293,1318 294,1323 297,1360 300,1403 304,1428 308,1437 318,1443 326,1452 333,1456 340,1469 348,1468 355,1458 362,1463 370,1466 375,1455 382,1454 386,1464 391,1464 399,1450 406,1452 412,1437 420,1447 428,1433 441,1432 457,1414 463,1416 478,1412 486,1398 495,1400 508,1400 514,1393 522,1390 530,1393 542,1392 548,1399 554,1393 558,1399 562,1394 566,1398 570,1393 573,1398 576,1391 579,1399 582,1394 584,1384 586,1398 589,1392 592,1389 596,1400';
let eq = '<rect x="44" y="1215" width="553" height="256" fill="#0a0b0b"/>';
for (let d = 10; d <= 10000; d *= 10) for (let k = 1; k < 10; k++) {
    const f = d * k;
    if (f < 20 || f > 20000) continue;
    const x = 45.5 + 182.7 * Math.log10(f / 20);
    eq += line(`M${x.toFixed(1)} 1217V1470`, k == 1 ? '#2b2e2d' : '#161918');
}
eq += line('M45 1217H597M45 1280H597M45 1344H597M45 1407H597M45 1470H597M597 1217V1470', '#202322');
eq += `<polygon points="45,1470 ${eqPoints} 596,1470" fill="#8a9a92" opacity=".15"/><polyline points="${eqPoints}" fill="none" stroke="#8c9290" stroke-width="2"/>`;
const eqCurve = 'M44 1343H150C200 1343 220 1344 236 1347C275 1354 290 1368 308 1381C314 1387 324 1387 331 1381C346 1370 358 1354 388 1348C415 1343 440 1343 470 1343H597';
eq += line(eqCurve, '#ffffff', 6, 'opacity=".25"') + line(eqCurve, '#fbfcfd', 2.5);
eq += '<circle cx="320" cy="1385" r="12" fill="#66bfd0"/>' + label(319, 1389, '1', '#0f3038', 11);
eq += label(318, 1415, '632 Hz', '#4a92a3', 9) + label(318, 1429, '−4.0 dB', '#2f6572', 9);
eq += label(589, 1272, '+6', '#6e7175', 10, 'end') + label(589, 1335, '0', '#6e7175', 10, 'end') + label(589, 1399, '-6', '#6e7175', 10, 'end');
eq += label(172, 1462, '100', '#85888c') + label(355, 1462, '1k', '#85888c') + label(538, 1462, '10k', '#85888c') + label(589, 1462, '20k', '#a4a7ab', 10, 'end');
$('eq').innerHTML = eq;

/* ---------- compressor ---------- */
let tr = '<defs><radialGradient id="halo"><stop offset="0" stop-color="#fff" stop-opacity=".45"/><stop offset="1" stop-color="#fff" stop-opacity="0"/></radialGradient></defs>';
tr += line('M719 1237V1369M761 1237V1369M803 1237V1369M677 1269H847M677 1303H847M677 1335H847', '#3c3f41') + '<rect x="677" y="1237" width="170" height="132" fill="none" stroke="#6a6d70"/>';
tr += '<path d="M793 1369V1258q1-3 5-3h4q3 0 4 6l5 35 3-38q1-3 5-3h2q3 0 4 6l3 23 3-26q1-3 4-3h1q2 0 3 6l2 20 3-22q1-3 2-4V1369z" fill="#2c6658" fill-opacity=".22" stroke="#2c6658"/>';
tr += line('M677 1369H793', '#4f8d7f') + line('M783 1286L847 1237', '#5a5d61');
tr += '<circle cx="783" cy="1286" r="32" fill="url(#halo)"/>' + line('M677 1369L783 1286L823 1270L847 1261', '#f0f3f4', 3);
tr += '<circle cx="783" cy="1286" r="12" fill="none" stroke="#aab0b3" opacity=".6"/><circle cx="783" cy="1286" r="7" fill="#dfe8ea"/><circle cx="823" cy="1270" r="4" fill="#f4f5f7"/>';
[[0, 1245], [-12, 1273], [-24, 1307], [-36, 1339], [-48, 1367]].forEach(([t, y]) => tr += label(669, y, t, '#94979b', 10, 'end'));
[[-36, 718], [-24, 760], [-12, 803]].forEach(([t, x]) => tr += label(x, 1386, t, '#94979b'));
$('transfer').innerHTML = tr;

const gr = 'M1107 1254H1225l1 10h10l3-9 3-1 3 10h6l3-9 3-1 2 10h6l3-9 2-1 2 10h5';
let hi = line('M1107 1283H1277M1107 1314H1277M1107 1344H1277', '#303336') + '<path d="M1225 1374V1270h17l2 10 2 22 3-32h9l2 32 3-32h6l3 28 2-28h3V1374z" fill="#9aa39f" fill-opacity=".18"/>';
hi += line('M1107 1299H1277', '#dfe1e4', 2, 'stroke-dasharray="7 4"') + line('M1225 1374H1277', '#6e7175') + line(gr, '#d8574c', 2);
hi += line('M1107 1374H1225V1270h10l2 12 4 28 1-42h9l2 30h3l3-28h6l3 28 2-28h6', '#eef0f2', 2) + line('M1226 1281h10l3 8 4-8h8l3 8 3-8h8l3 8 3-8h6', '#b4b6b9');
[[0, 1261], [-12, 1287], [-24, 1317], [-36, 1347], [-48, 1372]].forEach(([t, y]) => hi += label(1100, y, t, '#94979b', 10, 'end'));
[['S', 1195], ['M', 1229], ['Sd', 1263]].forEach(([t, x]) => hi += `<g font-weight="500">${label(x, 1243, t, '#dfe1e4')}</g>`);
$('history').innerHTML = hi;

let bk = '<defs><linearGradient id="cap" x2="0" y2="1"><stop stop-color="#1f2225"/><stop offset="1" stop-color="#2a2d31"/></linearGradient></defs>';
bk += line(arc(965, 1378, 83, -135, 135), '#222528', 9) + line(arc(965, 1378, 83, 33, 135), '#6b2b27', 15) + line(arc(965, 1378, 83, 33, 135), '#dd5c50', 9) + line(arc(965, 1378, 83, 31, 34), '#e0952f', 9);
bk += '<circle cx="965" cy="1378" r="55" fill="#121416" stroke="#1d2023" stroke-width="2"/>';
for (let a = -135; a <= 135; a += 22.5) bk += line(ray(965, 1378, 64, 67, a), '#85888c', 1.5);
[-135, -67, 0, 31, 67, 101, 135].forEach(a => bk += line(ray(965, 1378, 91, 96, a), '#85888c', 1.5));
bk += line(arc(965, 1378, 41, -135, 135), '#303337', 5, 'stroke-linecap="round"') + line(arc(965, 1378, 41, -135, 56), '#dfe5ea', 6, 'stroke-linecap="round"');
bk += '<circle cx="965" cy="1378" r="31" fill="url(#cap)" stroke="#303337"/>' + line(ray(965, 1378, 14, 28, 54), '#f4f5f7', 2.5);
$('bigKnob').innerHTML = bk;

const knob = ([value, name, angle]) => `
    <div class="w-[59px] text-center flex flex-col items-center">
        <label class="relative block h-[47px] w-10">
            <input type="range" aria-label="${name}" min="-135" max="135" value="${angle}" class="absolute inset-0 w-10 opacity-0">
            <svg width="40" height="46" fill="none">
                <path d="${arc(20, 25, 17, -140, 140)}" stroke="#2a2c2f" stroke-width="3" stroke-linecap="round"/>
                ${angle > -135 ? `<path d="${arc(20, 25, 17, -140, angle)}" stroke="#e6ebef" stroke-width="4" stroke-linecap="round"/>` : ''}
                <circle cx="20" cy="25" r="10" fill="#25282c" stroke="#2f3236"/>
                <path d="${ray(20, 25, 4, 7, angle)}" stroke="#f4f5f7" stroke-width="2"/>
            </svg>
        </label>
        <output class="mt-[8px] w-[59px] h-5 bg-[#0e1011] border border-[#141617] text-[11px] font-bold leading-[18px] text-[#f0f1f3]">${value}</output>
        <span class="mt-[2px] text-[9px] leading-3 whitespace-nowrap text-[#b4b6b9]">${name}</span>
    </div>`;
$('compKnobs').innerHTML = [['2.0', 'RATIO', -32], ['10.0', 'ATTACK · MS', -107], ['120', 'RELEASE · MS', -101]].map(knob).join('');
$('compKnobs2').innerHTML = [['0.0', 'MAKEUP · DB', -135], ['1.00', 'MIX', 135]].map(knob).join('');
$('deKnobs').innerHTML = [['-20.0', 'THRESH · DB', 47], ['6.0k', 'FREQ · HZ', 29], ['4.0', 'RATIO', 22], ['1.0', 'ATTACK · MS', -122], ['50', 'RELEASE · MS', -111], ['-80', 'RANGE · DB', -135]].map(knob).join('');

const led = {d: 'bg-[#16181a]', g: 'bg-[#9cc25a]', h: 'bg-[#5d7334]', w: 'bg-[#d6dadd]'};
$('leds').innerHTML = [['ddggwwwwww', 'IN'], ['dddhwwwwww', 'OUT']].map(([s, t]) =>
    `<div class="flex flex-col gap-[3px] w-[13px] items-center pt-[3px]">${[...s].map(c => `<i class="block w-[13px] h-1 shrink-0 ${led[c]}"></i>`).join('')}<span class="mt-1">${t}</span></div>`).join('');

/* ---------- de-esser ---------- */
let bd = '<rect x="1350" y="1228" width="51" height="155" fill="#060708"/><rect x="1350" y="1228" width="51" height="61" fill="#26282b"/><rect x="1350" y="1289" width="51" height="2" fill="#f4f5f7"/>';
[['20k', 1230], ['', 1254], ['8k', 1275], ['', 1299], ['3k', 1325], ['', 1347], ['1k', 1381]].forEach(([t, y]) => bd += line(`M1392 ${y}h9`, '#6e7175') + label(1390, y + 3, t, '#94979b', 8, 'end'));
$('band').innerHTML = bd;

const det = '1420,1382 1522,1382 1527,1300 1535,1299 1542,1305 1547,1301 1560,1303 1566,1301 1570,1304 1574,1301 1580,1304 1586,1297 1590,1304 1599,1295 1610,1294 1616,1291 1630,1292 1634,1288 1639,1270 1643,1303 1653,1303 1658,1298 1663,1304 1672,1302 1678,1300 1687,1304 1694,1298 1707,1297 1712,1291 1717,1289 1722,1291 1726,1288 1732,1297 1741,1304 1747,1301 1755,1303 1760,1293 1764,1301 1770,1305 1775,1275 1780,1298 1789,1293 1793,1296 1799,1290 1805,1290 1813,1299 1818,1296 1823,1300 1829,1296 1842,1302 1849,1301 1853,1305';
$('detect').innerHTML = '<rect x="1420" y="1228" width="433" height="155" fill="#060708"/>' + line('M1420 1258H1853M1420 1289H1853M1420 1321H1853M1420 1352H1853', '#212426') +
    `<polygon points="${det} 1853,1383 1420,1383" fill="#3f7ea3" fill-opacity=".25"/>` + line('M1561 1228V1383M1707 1228V1383', '#34383b') +
    `<polyline points="${det}" fill="none" stroke="#5e9dbf" stroke-width="1.500"/>` + line('M1420 1279H1850', '#dfe1e4', 2, 'stroke-dasharray="6 4"');

/* ---------- reverb ---------- */
let dc = '<defs><linearGradient id="dark" x2="0" y2="1"><stop stop-color="#363b42"/><stop offset="1" stop-color="#0c1116"/></linearGradient></defs>';
dc += line(arc(2091, 1312, 45, -135, 135), '#b3c5d6', 4) + line(arc(2091, 1312, 45, -135, 6), '#a9d2f3', 8) + line(arc(2091, 1312, 45, -135, 6), '#57a5e2', 4);
[-135, -75, -30, 18, 62, 108, 135].forEach(a => dc += line(ray(2091, 1312, 50, 53, a), '#6d8196', 1.5));
dc += line(arc(2091, 1312, 24, -135, 135), '#b3c5d6', 4) + line(arc(2091, 1312, 24, -135, 15), '#57a5e2', 4);
dc += '<circle cx="2091" cy="1312" r="20" fill="url(#dark)" stroke="#eef4fa"/>' + line(ray(2091, 1312, 6, 16, 9), '#f4f5f7', 3);
$('decay').innerHTML = dc;

let tl = '<defs><linearGradient id="wash" x2="0" y2="1"><stop stop-color="#2c5f8c"/><stop offset="1" stop-color="#10243c"/></linearGradient></defs>';
tl += '<rect x="2207" y="1248" width="420" height="113" fill="#fff" opacity=".07"/><path d="M2331 1248L2627 1300V1361H2331z" fill="url(#wash)"/>';
[0, -12, -24, -36, -48, -60].forEach((t, i) => tl += line(`M2207 ${1248 + i * 22.5}H2627`, '#34506f') + label(2200, 1251 + i * 22.5, t, '#7f98b3', 8, 'end'));
tl += line('M2302 1248V1361M2370 1233v12', '#3b6288', 2) + line('M2207 1323H2627', '#90a5bb', 1, 'stroke-dasharray="5 5"');
tl += line('M2331 1361V1248L2627 1260', '#eaf3fb', 2) + '<circle cx="2331" cy="1248" r="4.500" fill="#a9d2f3"/>' + label(2315, 1375, '10 ms', '#7f98b3', 8);
$('tail').innerHTML = tl;

$('reverbKnobs').innerHTML = [['PRE', -110, '20'], ['TONE', 10, '0.50']].map(([n, a, v]) => `
    <div class="w-[119px] shrink-0 pt-[3px] flex flex-col items-center">
        <span class="text-[9px] leading-3 tracking-[2px]">${n}</span>
        <label class="relative"><input type="range" aria-label="${n}" min="-135" max="135" value="${a}" class="absolute inset-0 w-10 opacity-0">
        <svg class="mt-1" width="40" height="38" fill="none"><path d="${arc(20, 21, 13, -135, 135)}" stroke="#b3c5d6" stroke-width="2"/><path d="${arc(20, 21, 13, -135, a)}" stroke="#57a5e2" stroke-width="3"/><circle cx="20" cy="21" r="10" fill="#171c22"/><path d="${ray(20, 21, 3, 7, a)}" stroke="#f4f5f7" stroke-width="2"/></svg></label>
        <b class="mt-[11px] text-[12px] leading-4 font-medium text-[#2c4763]">${v}</b>
    </div>`).join('');
</script>
</body>
</html>
